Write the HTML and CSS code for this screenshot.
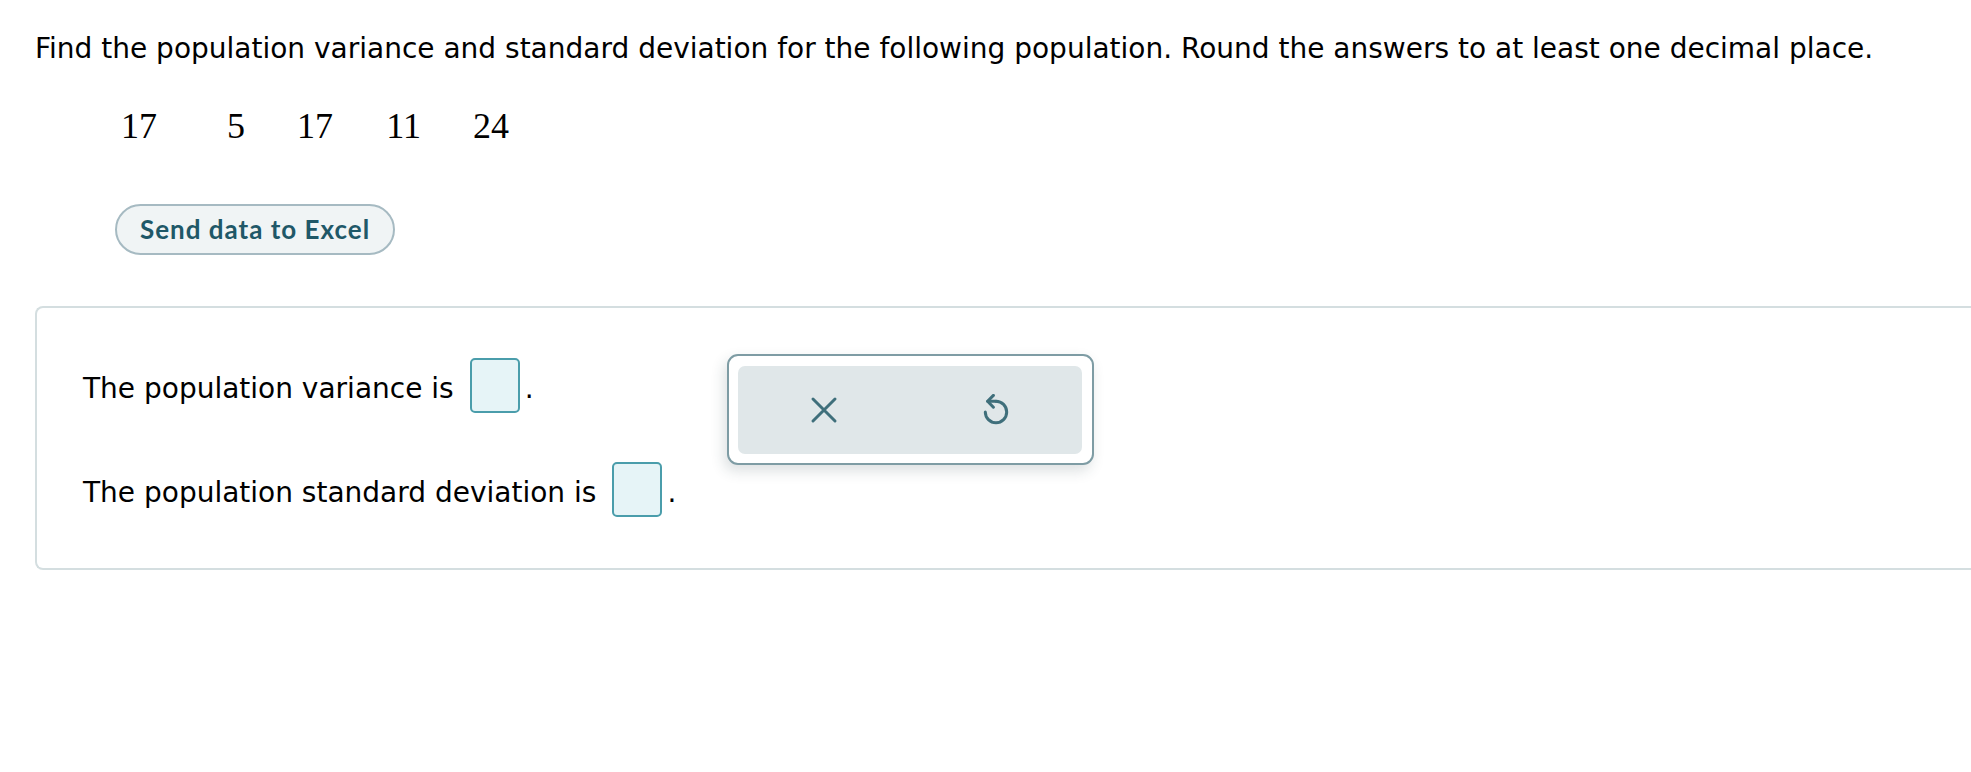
FILE: index.html
```html
<!DOCTYPE html>
<html lang="en">
<head>
<meta charset="utf-8">
<title>Population variance</title>
<link rel="stylesheet" href="styles.css">
</head>
<body>
<main class="page">
  <p class="question">Find the population variance and standard deviation for the following population. Round the answers to at least one decimal place.</p>
  <div class="data">
    <span class="cell">17</span>
    <span class="cell">5</span>
    <span class="cell">17</span>
    <span class="cell">11</span>
    <span class="cell">24</span>
  </div>
  <button class="excel-btn" type="button">Send data to Excel</button>
  <section class="answer-box">
    <div class="answers">
      <div class="row">
        <span class="label">The population variance is</span>
        <span class="input"></span>
        <span class="dot">.</span>
      </div>
      <div class="row">
        <span class="label">The population standard deviation is</span>
        <span class="input"></span>
        <span class="dot">.</span>
      </div>
    </div>
    <div class="toolbar">
      <div class="toolbar-inner">
        <button class="tool" type="button" aria-label="Clear">
          <svg width="32" height="32" viewBox="0 0 32 32" fill="none" stroke="#3f6f7b" stroke-width="3" stroke-linecap="round">
            <path d="M5 5 L27 27 M27 5 L5 27"/>
          </svg>
        </button>
        <button class="tool" type="button" aria-label="Undo">
          <svg width="32" height="32" viewBox="0 0 32 32" fill="none" stroke="#3f6f7b" stroke-width="3" stroke-linecap="round" stroke-linejoin="round">
            <path d="M16 7.3 A10.7 10.7 0 1 1 5.3 18"/>
            <path d="M13.4 1.4 L7.6 7.3 L13.4 13.2"/>
            <path d="M7.8 7.3 L16 7.3"/>
          </svg>
        </button>
      </div>
    </div>
  </section>
</main>
</body>
</html>
```
FILE: styles.css
```css
html, body {
  margin: 0;
  padding: 0;
  background: #ffffff;
}

.page {
  padding: 29px 0 0 35px;
  font-family: "DejaVu Sans", Verdana, sans-serif;
  color: #000;
  overflow: hidden;
}

.question {
  margin: 0;
  font-size: 28px;
  line-height: 40px;
  white-space: nowrap;
}

.data {
  display: flex;
  gap: 52px;
  margin: 37px 0 0 86px;
  font-family: "Liberation Serif", "Times New Roman", serif;
  font-size: 36px;
  line-height: 40px;
}

.cell {
  min-width: 36px;
  text-align: right;
}

.excel-btn {
  display: block;
  margin: 58px 0 0 80px;
  width: 280px;
  height: 51px;
  border: 2px solid #a6bac2;
  border-radius: 26px;
  background: #f0f4f5;
  color: #1f5868;
  font-family: Lato, "Open Sans", sans-serif;
  font-weight: 700;
  font-size: 26px;
  letter-spacing: 1px;
  padding: 0 0 2px 0;
}

.answer-box {
  margin-top: 51px;
  display: grid;
  grid-template-columns: 644px 367px;
  padding: 46px 0 51px 46px;
  border: 2px solid #d4dee0;
  border-right: none;
  border-radius: 8px 0 0 8px;
  width: 2100px;
}

.answers {
  display: flex;
  flex-direction: column;
  gap: 49px;
  padding-top: 4px;
}

.row {
  display: flex;
  align-items: center;
  height: 55px;
  font-size: 28px;
}

.label {
  line-height: 30px;
  margin-top: 6px;
  white-space: nowrap;
}

.input {
  width: 46px;
  height: 51px;
  margin-left: 16px;
  border: 2px solid #4a9dab;
  border-radius: 5px;
  background: #e6f4f7;
}

.dot {
  margin-left: 5px;
  line-height: 30px;
  margin-top: 6px;
}

.toolbar {
  width: 367px;
  height: 111px;
  box-sizing: border-box;
  border: 2px solid #7e9ca4;
  border-radius: 11px;
  background: #fff;
  padding: 10px 10px 9px 9px;
  box-shadow: -3px 6px 14px rgba(40, 60, 70, 0.16);
}

.toolbar-inner {
  display: flex;
  height: 100%;
  background: #e0e7e9;
  border-radius: 7px;
}

.tool {
  flex: 1;
  display: flex;
  align-items: center;
  justify-content: center;
  border: none;
  background: transparent;
  padding: 0;
}
```
